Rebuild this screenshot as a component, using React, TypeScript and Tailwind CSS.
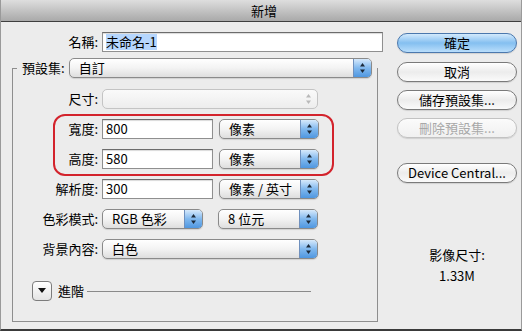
import React from 'react';

const font = { fontFamily: '"Lucida Grande", "Noto Sans CJK TC", "Noto Sans", sans-serif' };

function Arrows({ dim }: { dim?: boolean }) {
  const c = dim ? '#b9b9b9' : '#1c2a3a';
  return (
    <svg width="7" height="12" viewBox="0 0 7 12">
      <path d="M3.5 1 L6 4.5 L1 4.5 Z" fill={c} />
      <path d="M3.5 11 L6 7.5 L1 7.5 Z" fill={c} />
    </svg>
  );
}

function Select({ value, w, disabled }: { value: string; w: string; disabled?: boolean }) {
  if (disabled) {
    return (
      <div className={`flex h-[20px] ${w} items-center rounded-[5px] border border-[#c4c4c4] bg-gradient-to-b from-[#fafafa] to-[#ededed]`}>
        <span className="flex-1" />
        <span className="flex w-[18px] items-center justify-center">
          <Arrows dim />
        </span>
      </div>
    );
  }
  return (
    <div className={`flex h-[20px] ${w} items-center rounded-[5px] border border-[#8a8a8a] bg-gradient-to-b from-white via-[#f3f3f3] to-[#dedede] shadow-[0_1px_1px_rgba(0,0,0,0.12)]`}>
      <span className="flex-1 whitespace-nowrap pl-[9px] text-[13px] leading-[16px] text-black">{value}</span>
      <span className="flex h-full w-[18px] shrink-0 items-center justify-center rounded-r-[4px] border-l border-[#6f90bd] bg-gradient-to-b from-[#d6e9fb] via-[#80b8ee] to-[#4f97e0]">
        <Arrows />
      </span>
    </div>
  );
}

function Input({ value, w, selected }: { value: string; w: string; selected?: boolean }) {
  return (
    <div className={`flex h-[20px] ${w} items-center border border-[#8f8f8f] border-t-[#6c6c6c] bg-white pl-[3px] shadow-[inset_0_1px_1px_rgba(0,0,0,0.15)]`}>
      <span className={`whitespace-nowrap text-[13px] leading-[16px] text-black ${selected ? 'bg-[#b6d6fd]' : ''}`}>{value}</span>
    </div>
  );
}

function Row({ label, lw, children }: { label: string; lw: string; children: React.ReactNode }) {
  return (
    <div className="flex items-center">
      <span className={`${lw} whitespace-nowrap text-right text-[13px] leading-[16px] text-black`}>{label}</span>
      <div className="ml-[4px] flex items-center gap-[6px]">{children}</div>
    </div>
  );
}

function Btn({ label, primary, disabled }: { label: string; primary?: boolean; disabled?: boolean }) {
  const look = primary
    ? 'border-[#4b78ad] bg-gradient-to-b from-[#d3eafc] via-[#84bff0] to-[#b9defb]'
    : disabled
      ? 'border-[#c2c2c2] bg-gradient-to-b from-[#fbfbfb] to-[#f0f0f0]'
      : 'border-[#7a7a7a] bg-gradient-to-b from-white via-[#ececec] to-[#fafafa]';
  return (
    <div className={`flex h-[20px] w-[120px] items-center justify-center rounded-full border shadow-[0_1px_1px_rgba(0,0,0,0.12)] ${look}`}>
      <span className={`whitespace-nowrap text-[13px] leading-[16px] ${disabled ? 'text-[#a8a8a8]' : 'text-black'}`}>{label}</span>
    </div>
  );
}

export default function App() {
  return (
    <div className="h-[335px] w-[528px] overflow-hidden bg-white" style={font}>
      <div className="h-[331px] w-[522px] border-x border-b-2 border-x-[#9a9a9a] border-b-[#3a3a3a] bg-[#ececec]">
        {/* Title bar */}
        <div className="flex h-[22px] items-center justify-center border-b border-[#3f3f3f] bg-gradient-to-b from-[#dedede] to-[#a9a9a9]">
          <span className="ml-[6px] text-[13px] leading-[16px] text-black">新增</span>
        </div>

        <div className="flex">
          {/* Left column */}
          <div className="w-[384px] pl-[11px]">
            <div className="mt-[10px]">
              <Row label="名稱:" lw="w-[86px]">
                <Input value="未命名-1" w="w-[281px]" selected />
              </Row>
            </div>

            <fieldset className="mt-[6px] h-[264px] w-[366px] border border-[#8e8e8e]">
              <legend className="ml-[4px] flex items-center px-[5px]">
                <span className="whitespace-nowrap text-[13px] leading-[16px] text-black">預設集:</span>
                <div className="ml-[4px]">
                  <Select value="自訂" w="w-[303px]" />
                </div>
              </legend>

              <div className="mt-[11px] flex flex-col">
                <Row label="尺寸:" lw="w-[85px]">
                  <Select value="" w="w-[216px]" disabled />
                </Row>

                <div className="ml-[40px] mt-[5px] flex h-[62px] w-[281px] flex-col gap-[10px] rounded-[12px] border-2 border-[#d3232c] pt-[3px]">
                  <Row label="寬度:" lw="w-[43px]">
                    <Input value="800" w="w-[111px]" />
                    <Select value="像素" w="w-[100px]" />
                  </Row>
                  <Row label="高度:" lw="w-[43px]">
                    <Input value="580" w="w-[111px]" />
                    <Select value="像素" w="w-[100px]" />
                  </Row>
                </div>

                <div className="mt-[3px] flex flex-col gap-[10px]">
                  <Row label="解析度:" lw="w-[85px]">
                    <Input value="300" w="w-[111px]" />
                    <Select value="像素 / 英寸" w="w-[100px]" />
                  </Row>
                  <Row label="色彩模式:" lw="w-[85px]">
                    <div className="flex items-center gap-[15px]">
                      <Select value="RGB 色彩" w="w-[101px]" />
                      <Select value="8 位元" w="w-[100px]" />
                    </div>
                  </Row>
                  <Row label="背景內容:" lw="w-[85px]">
                    <Select value="白色" w="w-[216px]" />
                  </Row>
                </div>

                <div className="ml-[19px] mt-[22px] flex items-center">
                  <div className="flex h-[20px] w-[20px] items-center justify-center rounded-[4px] border border-[#7c7c7c] bg-gradient-to-b from-white to-[#e4e4e4]">
                    <svg width="8" height="6" viewBox="0 0 8 6">
                      <path d="M0 0 L8 0 L4 5 Z" fill="#111" />
                    </svg>
                  </div>
                  <span className="ml-[6px] text-[13px] leading-[16px] text-black">進階</span>
                  <div className="ml-[3px] h-px w-[224px] bg-[#8a8a8a]" />
                </div>
              </div>
            </fieldset>
          </div>

          {/* Right column */}
          <div className="ml-[12px] flex flex-col items-center">
            <div className="mt-[11px]">
              <Btn label="確定" primary />
            </div>
            <div className="mt-[9px]">
              <Btn label="取消" />
            </div>
            <div className="mt-[8px]">
              <Btn label="儲存預設集..." />
            </div>
            <div className="mt-[8px]">
              <Btn label="刪除預設集..." disabled />
            </div>
            <div className="mt-[25px]">
              <Btn label="Device Central..." />
            </div>
            <span className="mt-[64px] text-[13px] leading-[16px] text-black">影像尺寸:</span>
            <span className="mt-[5px] text-[13px] leading-[16px] text-black">1.33M</span>
          </div>
        </div>
      </div>
    </div>
  );
}
